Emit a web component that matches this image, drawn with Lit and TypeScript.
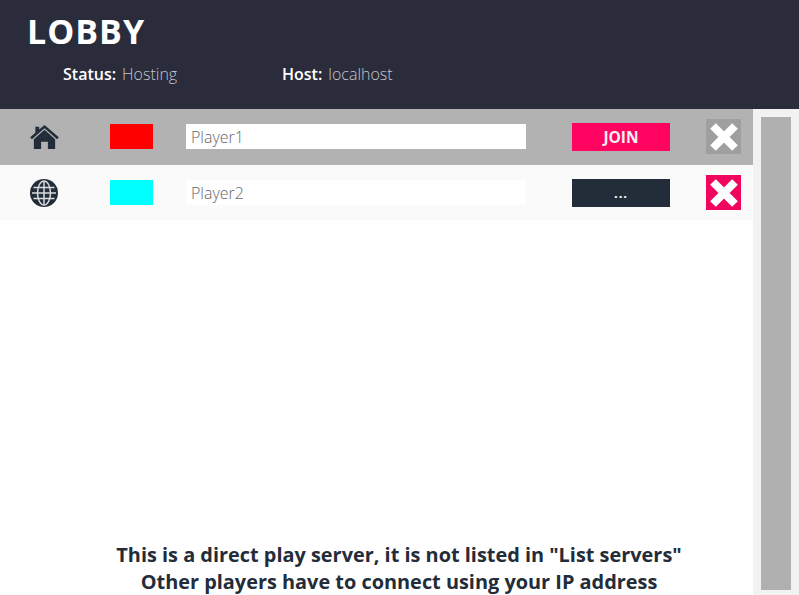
import { LitElement, html, css } from "lit";
import { customElement } from "lit/decorators.js";

const house = html`<svg class="ico" viewBox="0 0 30 26" width="29" height="26" aria-hidden="true">
  <path fill="#232d39" d="M15 0.5 L29.8 13.2 L28 15.2 L15 4 L2 15.2 L0.2 13.2 L5.5 8.6 V2.5 H9.5 V5.2 Z"/>
  <path fill="#232d39" d="M15 5.6 L26 15.2 V25.5 H18.5 V18 H11.5 V25.5 H4 V15.2 Z"/>
</svg>`;

const globe = html`<svg class="ico" viewBox="0 0 28 28" width="28" height="28" aria-hidden="true">
  <circle cx="14" cy="14" r="14" fill="#232d39"/>
  <g fill="none" stroke="#d8dadd" stroke-width="1.5">
    <ellipse cx="14" cy="14" rx="6.5" ry="12"/>
    <path d="M14 2.5V25.5M3.5 8.5H24.5M3.5 19.5H24.5M2 14H26"/>
  </g>
</svg>`;

const cross = html`<svg viewBox="0 0 34 34" width="34" height="34" aria-hidden="true">
  <path fill="none" stroke="#fff" stroke-width="8" d="M6 6 L28 28 M28 6 L6 28"/>
</svg>`;

@customElement("app-root")
export class AppRoot extends LitElement {
  static styles = css`
    :host {
      display: flex;
      flex-direction: column;
      width: 799px;
      height: 595px;
      overflow: hidden;
      background: #fff;
      font-family: "Open Sans", sans-serif;
    }
    .header {
      flex: none;
      height: 109px;
      box-sizing: border-box;
      background: #2a2c3b;
      padding: 8px 0 0 27px;
      color: #fff;
    }
    h1 {
      margin: 0;
      font-size: 34px;
      line-height: 46px;
      font-weight: 700;
      letter-spacing: 1px;
    }
    .info {
      display: flex;
      margin: 10px 0 0 36px;
      font-size: 16px;
      line-height: 20px;
    }
    .info > div {
      display: flex;
      gap: 6px;
    }
    .info > div:first-child {
      width: 219px;
    }
    .info b {
      font-weight: 600;
    }
    .info span {
      font-weight: 300;
      color: #c3c5cc;
    }
    .main {
      flex: 1;
      display: flex;
      min-height: 0;
    }
    .content {
      width: 753px;
      flex: none;
      display: flex;
      flex-direction: column;
    }
    .row {
      display: flex;
      align-items: center;
      padding-left: 30px;
      box-sizing: border-box;
    }
    .row.host {
      height: 56px;
      padding-bottom: 1px;
      background: #b2b2b2;
    }
    .row.peer {
      height: 55px;
      background: #fafafa;
    }
    .icon-cell {
      width: 30px;
      display: flex;
      margin-right: 50px;
    }
    .ico {
      display: block;
    }
    .swatch {
      width: 43px;
      height: 25px;
      margin-right: 33px;
    }
    .name {
      width: 340px;
      height: 25px;
      box-sizing: border-box;
      padding-left: 5px;
      margin-right: 46px;
      background: #fff;
      color: #5f6670;
      font-size: 16px;
      font-weight: 300;
      line-height: 27px;
    }
    .action {
      width: 98px;
      height: 28px;
      margin-right: 36px;
      display: flex;
      align-items: center;
      justify-content: center;
      color: #fff;
      font-size: 15.5px;
      font-weight: 700;
    }
    .action.join {
      background: #ff0461;
      color: #f6f0f2;
    }
    .action.wait {
      background: #232d39;
      font-size: 13px;
      letter-spacing: 1px;
    }
    .kick {
      width: 35px;
      height: 35px;
      display: flex;
      align-items: center;
      justify-content: center;
    }
    .host .kick {
      background: #a09fa0;
    }
    .peer .kick {
      background: #f0065f;
    }
    .note {
      margin-top: auto;
      height: 55px;
      box-sizing: border-box;
      padding-left: 45px;
      text-align: center;
      color: #232d39;
      font-size: 19.9px;
      line-height: 27px;
      font-weight: 700;
      margin-bottom: -1px;
    }
    .scroll {
      flex: 1;
      background: #f2f2f2;
      box-sizing: border-box;
      padding: 8px 8px 5px;
      display: flex;
    }
    .thumb {
      flex: 1;
      background: #b0b0b0;
    }
  `;

  render() {
    return html`
      <div class="header">
        <h1>LOBBY</h1>
        <div class="info">
          <div><b>Status:</b><span>Hosting</span></div>
          <div><b>Host:</b><span>localhost</span></div>
        </div>
      </div>
      <div class="main">
        <div class="content">
          <div class="row host">
            <div class="icon-cell">${house}</div>
            <div class="swatch" style="background:#ff0000"></div>
            <div class="name">Player1</div>
            <div class="action join">JOIN</div>
            <div class="kick">${cross}</div>
          </div>
          <div class="row peer">
            <div class="icon-cell">${globe}</div>
            <div class="swatch" style="background:#00ffff"></div>
            <div class="name">Player2</div>
            <div class="action wait">...</div>
            <div class="kick">${cross}</div>
          </div>
          <div class="note">
            This is a direct play server, it is not listed in "List servers"<br />
            Other players have to connect using your IP address
          </div>
        </div>
        <div class="scroll"><div class="thumb"></div></div>
      </div>
    `;
  }
}
